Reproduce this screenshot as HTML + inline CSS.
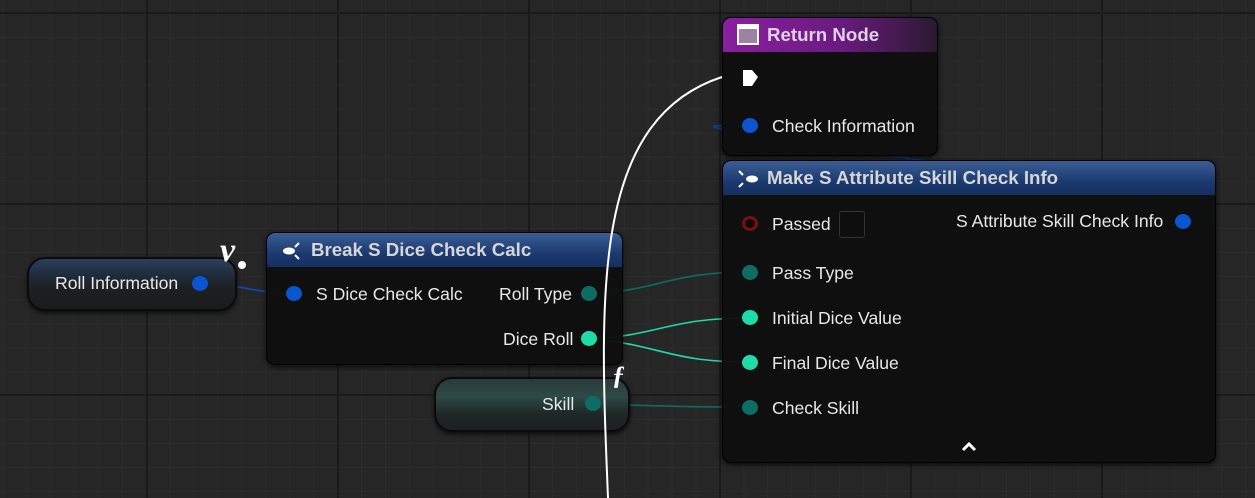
<!DOCTYPE html>
<html><head><meta charset="utf-8"><style>
*{margin:0;padding:0;box-sizing:border-box}
body{width:1255px;height:498px;overflow:hidden;background:#262626;font-family:"Liberation Sans",sans-serif;position:relative;
background-image:
linear-gradient(90deg,#1a1a1a 0 2px,transparent 2px),
linear-gradient(0deg,#1a1a1a 0 2px,transparent 2px),
linear-gradient(90deg,#2c2c2c 0 1px,transparent 1px),
linear-gradient(0deg,#2c2c2c 0 1px,transparent 1px);
background-size:191px 191px,191px 191px,23.9px 23.9px,23.9px 23.9px;
background-position:146px 0,0 14px,146px 0,0 14px;}
.node{position:absolute;background:rgba(14,15,14,.96);border:1px solid #000;border-radius:9px;box-shadow:0 2px 6px rgba(0,0,0,.7);overflow:hidden}
.hdr{height:34px;color:#d6d6d6;font-weight:bold;font-size:18.7px;line-height:33px;padding-left:44px;position:relative}
.blue{background:linear-gradient(180deg,#3a5e94 0,#1b3a70 60%,#13305e 100%);}
.purple{background:linear-gradient(90deg,#8a1fa0 0,#6a1a80 55%,#2a1a30 100%);}
.t{position:absolute;color:#e8e8e8;font-size:17.6px;white-space:nowrap}
.pin{position:absolute;width:16px;height:15px;border-radius:50%}
.pb{background:#0b55d0}.pt{background:#0c6d63}.pg{background:#1edba7}
.var{position:absolute;border-radius:18px;border:2px solid #0a0a0a;box-shadow:0 2px 5px rgba(0,0,0,.7)}
</style></head><body>
<svg width="1255" height="498" style="position:absolute;left:0;top:0">
<g fill="none" stroke-width="1.6">
<path d="M207 284 C240 284,260 294,293 294" stroke="#1049b8"/>
<path d="M592 294 C660 290,670 272,748 272" stroke="#0c6d63"/>
<path d="M592 339 C660 335,670 318,748 318" stroke="#1edba7"/>
<path d="M592 339 C660 345,670 362,748 362" stroke="#1edba7"/>
<path d="M596 404 C660 406,680 407,748 407" stroke="#0c6d63"/>
<path d="M1185 221 C1220 221,1225 215,1185 205 C1050 175,760 140,714 127 C712 125,720 126,748 126" stroke="#0d3f9a"/>
</g></svg>

<div class="var" style="left:27px;top:257px;width:210px;height:54px;background:linear-gradient(180deg,#2b3f5c 0,#1f2a38 35%,#1d2020 60%,#1a1c1c 100%)"></div>
<div class="t" style="left:55px;top:273px">Roll Information</div>
<div class="pin pb" style="left:192px;top:276px"></div>
<div class="t" style="left:220px;top:232px;font-family:'Liberation Serif',serif;font-style:italic;font-weight:bold;font-size:34px;color:#fff">v</div>
<div style="position:absolute;left:238px;top:261px;width:8px;height:8px;border-radius:50%;background:#fff"></div>

<div class="var" style="left:434px;top:377px;width:196px;height:55px;background:linear-gradient(180deg,#2a3a3a 0,#2d4a46 35%,#1f2a29 65%,#1c1f1f 100%)"></div>
<div class="t" style="left:542px;top:394px">Skill</div>
<div class="pin pt" style="left:585px;top:396px"></div>

<div class="node" style="left:266px;top:232px;width:357px;height:133px">
<div class="hdr blue">Break S Dice Check Calc</div>
<svg style="position:absolute;left:14px;top:8px" width="22" height="20"><ellipse cx="8" cy="10" rx="6" ry="3.5" fill="#fff"/><path d="M14 6 L18 2 M14 14 L18 18" stroke="#fff" stroke-width="2"/></svg>
</div>
<div class="pin pb" style="left:286px;top:286px"></div>
<div class="t" style="left:316px;top:284px">S Dice Check Calc</div>
<div class="t" style="left:499px;top:284px">Roll Type</div>
<div class="pin pt" style="left:581px;top:286px"></div>
<div class="t" style="left:503px;top:329px">Dice Roll</div>
<div class="pin pg" style="left:581px;top:331px"></div>

<div class="node" style="left:722px;top:17px;width:216px;height:139px">
<div class="hdr purple" style="color:#e0d0e6">Return Node</div>
<div style="position:absolute;left:14px;top:6px;width:22px;height:21px;border:2px solid #fff;background:linear-gradient(180deg,#fff 0 3px,#9e82a6 3px)"></div>
</div>
<svg style="position:absolute;left:741px;top:68px" width="20" height="20"><path d="M2 2 H11 L17 9 L11 18 H2 Z" fill="#fff"/></svg>
<div class="pin pb" style="left:742px;top:118px"></div>
<div class="t" style="left:772px;top:116px">Check Information</div>

<div class="node" style="left:722px;top:160px;width:494px;height:303px">
<div class="hdr blue">Make S Attribute Skill Check Info</div>
<svg style="position:absolute;left:12px;top:7px" width="26" height="22"><ellipse cx="17" cy="11" rx="6" ry="3.5" fill="#fff"/><path d="M4 3 L8 7 M4 19 L8 15" stroke="#fff" stroke-width="2"/></svg>
</div>
<div class="pin" style="left:742px;top:216px;border:3px solid #7a0f0f;background:#150505"></div>
<div class="t" style="left:772px;top:214px">Passed</div>
<div style="position:absolute;left:839px;top:211px;width:26px;height:27px;border:1px solid #333;border-radius:3px;background:#0e0e0e"></div>
<div class="t" style="left:956px;top:211px">S Attribute Skill Check Info</div>
<div class="pin pb" style="left:1175px;top:214px"></div>
<div class="pin pt" style="left:742px;top:265px"></div>
<div class="t" style="left:772px;top:263px">Pass Type</div>
<div class="pin pg" style="left:742px;top:310px"></div>
<div class="t" style="left:772px;top:308px">Initial Dice Value</div>
<div class="pin pg" style="left:742px;top:355px"></div>
<div class="t" style="left:772px;top:353px">Final Dice Value</div>
<div class="pin pt" style="left:742px;top:400px"></div>
<div class="t" style="left:772px;top:398px">Check Skill</div>
<svg style="position:absolute;left:961px;top:440px" width="16" height="12"><path d="M2 10 L8 4 L14 10" stroke="#fff" stroke-width="3" fill="none"/></svg>

<svg width="1255" height="498" style="position:absolute;left:0;top:0">
<path d="M608 498 C600 300,590 120,722 77" stroke="#fff" stroke-width="2" fill="none"/>
</svg>
<div class="t" style="left:612px;top:361px;font-family:'Liberation Serif',serif;font-style:italic;font-weight:bold;font-size:26px;color:#fff">ƒ</div>
</body></html>
